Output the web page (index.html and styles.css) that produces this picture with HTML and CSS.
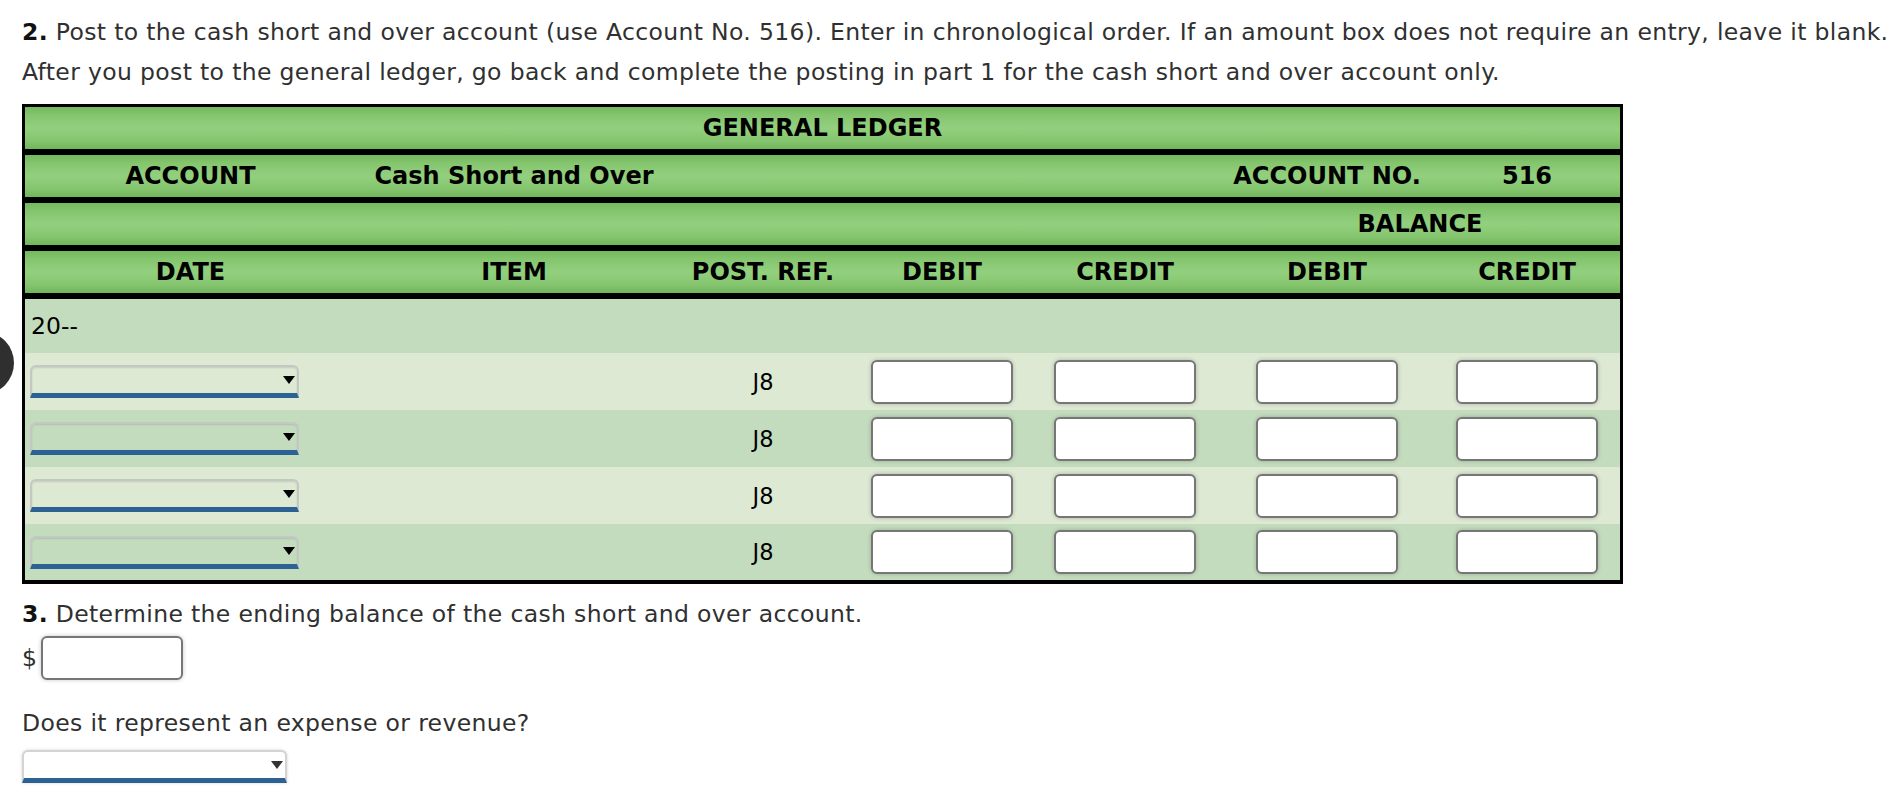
FILE: index.html
```html
<!DOCTYPE html>
<html>
<head>
<meta charset="utf-8">
<link rel="stylesheet" href="styles.css">
</head>
<body>
<div class="edge-dot"></div>
<div class="page">
  <p class="intro"><b>2.</b> Post to the cash short and over account (use Account No. 516). Enter in chronological order. If an amount box does not require an entry, leave it blank.<br>After you post to the general ledger, go back and complete the posting in part 1 for the cash short and over account only.</p>

  <div class="ledger">
    <div class="hrow title">GENERAL LEDGER</div>
    <div class="sep"></div>
    <div class="hrow cols">
      <span class="c">ACCOUNT</span>
      <span class="c">Cash Short and Over</span>
      <span></span><span></span><span></span>
      <span class="c">ACCOUNT NO.</span>
      <span class="c">516</span>
    </div>
    <div class="sep"></div>
    <div class="hrow cols">
      <span></span><span></span><span></span><span></span><span></span>
      <span class="c span2">BALANCE</span>
    </div>
    <div class="sep"></div>
    <div class="hrow cols">
      <span class="c">DATE</span>
      <span class="c">ITEM</span>
      <span class="c">POST. REF.</span>
      <span class="c">DEBIT</span>
      <span class="c">CREDIT</span>
      <span class="c">DEBIT</span>
      <span class="c">CREDIT</span>
    </div>
    <div class="sep"></div>
    <div class="drow year"><span class="yr">20--</span></div>

    <div class="drow cols light">
      <div class="sel-cell"><span class="dd"><select class="sel"></select><svg class="arrow" width="12" height="8" viewBox="0 0 12 8"><path d="M0 0H12L6 8Z"/></svg></span></div>
      <div></div>
      <div class="ref">J8</div>
      <div class="ic"><input class="amt" type="text"></div>
      <div class="ic"><input class="amt" type="text"></div>
      <div class="ic"><input class="amt" type="text"></div>
      <div class="ic"><input class="amt" type="text"></div>
    </div>
    <div class="drow cols dark">
      <div class="sel-cell"><span class="dd"><select class="sel"></select><svg class="arrow" width="12" height="8" viewBox="0 0 12 8"><path d="M0 0H12L6 8Z"/></svg></span></div>
      <div></div>
      <div class="ref">J8</div>
      <div class="ic"><input class="amt" type="text"></div>
      <div class="ic"><input class="amt" type="text"></div>
      <div class="ic"><input class="amt" type="text"></div>
      <div class="ic"><input class="amt" type="text"></div>
    </div>
    <div class="drow cols light">
      <div class="sel-cell"><span class="dd"><select class="sel"></select><svg class="arrow" width="12" height="8" viewBox="0 0 12 8"><path d="M0 0H12L6 8Z"/></svg></span></div>
      <div></div>
      <div class="ref">J8</div>
      <div class="ic"><input class="amt" type="text"></div>
      <div class="ic"><input class="amt" type="text"></div>
      <div class="ic"><input class="amt" type="text"></div>
      <div class="ic"><input class="amt" type="text"></div>
    </div>
    <div class="drow cols dark last">
      <div class="sel-cell"><span class="dd"><select class="sel"></select><svg class="arrow" width="12" height="8" viewBox="0 0 12 8"><path d="M0 0H12L6 8Z"/></svg></span></div>
      <div></div>
      <div class="ref">J8</div>
      <div class="ic"><input class="amt" type="text"></div>
      <div class="ic"><input class="amt" type="text"></div>
      <div class="ic"><input class="amt" type="text"></div>
      <div class="ic"><input class="amt" type="text"></div>
    </div>
  </div>

  <p class="q3"><b>3.</b> Determine the ending balance of the cash short and over account.</p>
  <div class="money"><span class="dollar">$</span><input class="amt" type="text"></div>
  <p class="q3b">Does it represent an expense or revenue?</p>
  <div class="dd dd-white"><select class="sel"></select><svg class="arrow" width="12" height="8" viewBox="0 0 12 8"><path d="M0 0H12L6 8Z"/></svg></div>
</div>
</body>
</html>
```

FILE: styles.css
```css
html, body {
  margin: 0;
  padding: 0;
  background: #ffffff;
}

body {
  font-family: "DejaVu Sans", Verdana, sans-serif;
  color: #303030;
  position: relative;
  min-height: 812px;
  overflow: hidden;
}

.edge-dot {
  position: absolute;
  left: -46px;
  top: 332px;
  width: 60px;
  height: 62px;
  border-radius: 50%;
  background: #2f2f2f;
}

.page {
  padding: 0 0 0 22px;
}

.intro {
  margin: 12px 0 0 0;
  font-size: 23.5px;
  letter-spacing: 0.35px;
  line-height: 40px;
  white-space: nowrap;
}

.intro b, .q3 b {
  color: #111;
}

.ledger {
  margin-top: 12px;
  width: 1595px;
  border: 3px solid #000;
  border-top-width: 3px;
  border-bottom-width: 4px;
  font-family: "DejaVu Sans", Verdana, sans-serif;
  color: #000;
}

.hrow {
  height: 42px;
  background: linear-gradient(to bottom, #74b85e 0%, #86c670 22%, #93d07e 50%, #86c670 78%, #72b65c 100%);
  font-weight: bold;
  font-size: 24px;
  line-height: 42px;
}

.title {
  text-align: center;
}

.sep {
  height: 6px;
  background: #000;
}

.cols {
  display: grid;
  grid-template-columns: 331px 316px 182px 176px 190px 214px 186px;
}

.c {
  text-align: center;
  white-space: nowrap;
}

.span2 {
  grid-column: span 2;
}

.drow {
  height: 57px;
}

.year {
  height: 54px;
  background: #c4dcbe;
  display: flex;
  align-items: center;
}

.yr {
  padding-left: 6px;
  font-size: 23.5px;
}

.light {
  background: #dde9d3;
}

.dark {
  background: #c4dcbe;
}

.last {
  height: 56px;
}

.drow.cols > div {
  display: flex;
  align-items: center;
}

.sel-cell {
  padding-left: 5px;
}

.dd {
  position: relative;
  display: inline-block;
  width: 269px;
  height: 33px;
}

.sel {
  appearance: none;
  -webkit-appearance: none;
  display: block;
  box-sizing: border-box;
  width: 269px;
  height: 33px;
  margin: 0;
  border: 2px solid #c6c6c6;
  border-bottom: 5px solid #2b6293;
  border-radius: 6px 6px 0 0;
  background: transparent;
  box-shadow: inset 0 1px 2px rgba(0,0,0,0.12);
}

.arrow {
  position: absolute;
  right: 4px;
  top: 11px;
  fill: #000;
}

.ref {
  justify-content: center;
  font-size: 22.5px;
}

.ic {
  justify-content: center;
}

.amt {
  box-sizing: border-box;
  width: 142px;
  height: 44px;
  margin: 0;
  padding: 0;
  border: 2px solid #767676;
  border-radius: 6px;
  background: #fff;
  box-shadow: 0 0 4px rgba(0,0,0,0.22);
  outline: none;
}

.q3 {
  margin: 13px 0 0 0;
  font-size: 23.5px;
  letter-spacing: 0.35px;
  line-height: 34px;
}

.money {
  margin-top: 5px;
  display: flex;
  align-items: center;
  font-size: 23.5px;
}

.dollar {
  width: 19px;
}

.q3b {
  margin: 26px 0 0 0;
  font-size: 23.5px;
  letter-spacing: 0.35px;
  line-height: 34px;
}

.dd-white {
  margin-top: 10px;
  width: 265px;
}

.dd-white .sel {
  width: 265px;
  background: #fff;
  border-color: #d4d4d4;
  border-bottom-color: #2b6293;
  box-shadow: 0 0 3px rgba(0,0,0,0.18);
}

.dd-white .arrow {
  fill: #333;
}
```
